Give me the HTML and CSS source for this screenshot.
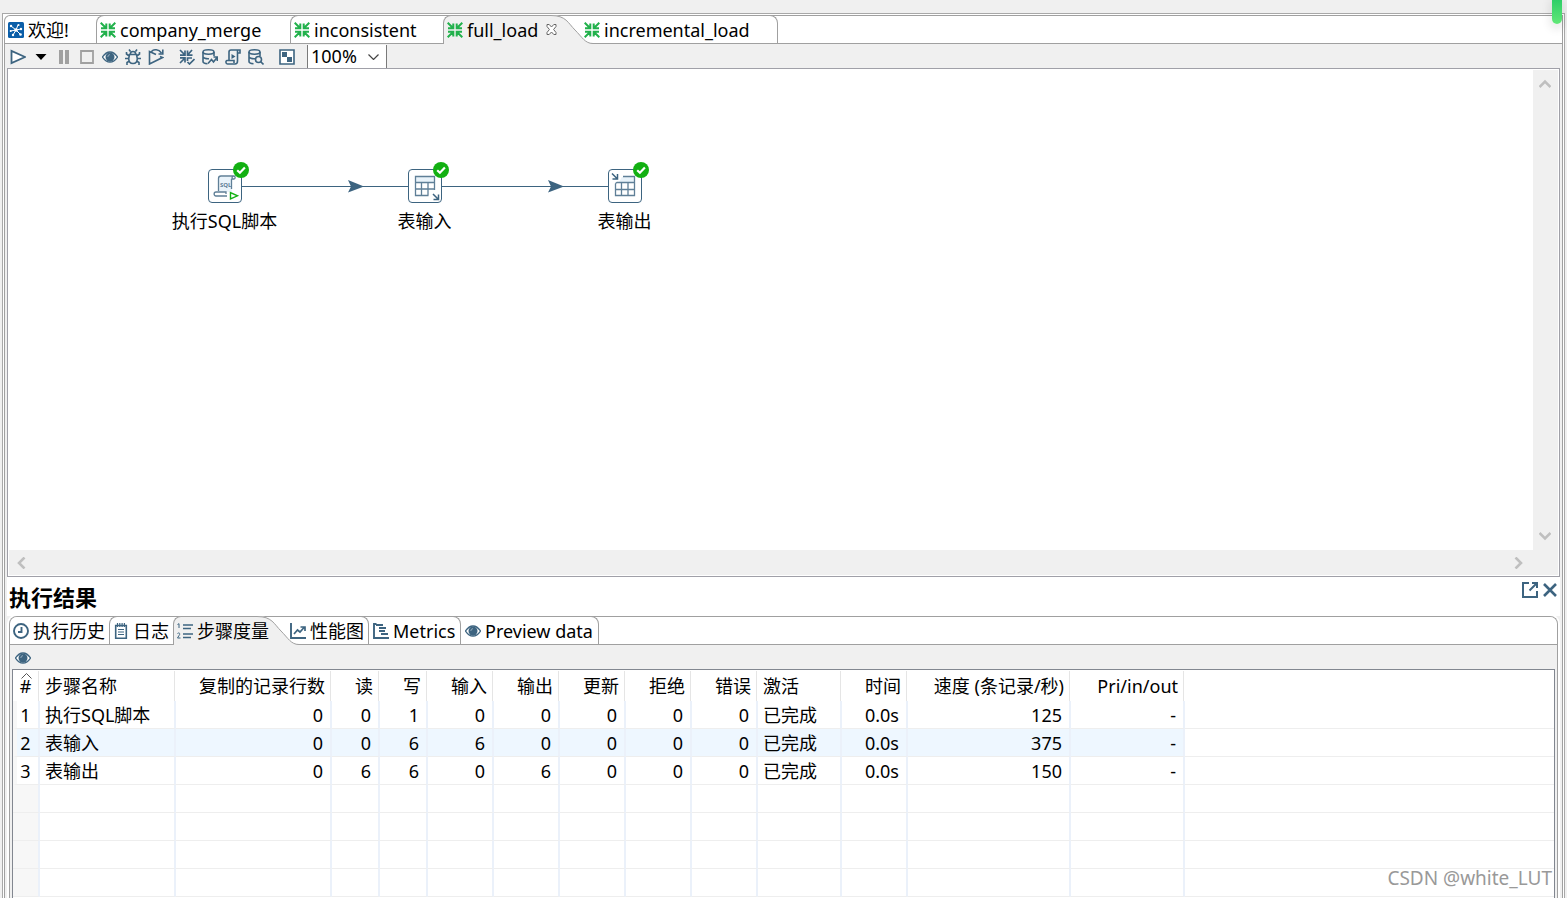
FILE: index.html
```html
<!DOCTYPE html>
<html lang="zh-CN">
<head>
<meta charset="utf-8">
<title>full_load</title>
<link rel="stylesheet" href="styles.css">
</head>
<body>
<svg class="defs" aria-hidden="true">
  <symbol id="trans" viewBox="0 0 16 16"><path d="M.7.7L6 6M6.300 1.500v4.800H1M15.300.7L10 6M9.700 1.500v4.800H15M.7 15.300L6 10M6.300 14.500V9.700H1M15.300 15.300L10 10M9.700 14.500V9.700H15" fill="none" stroke="#22b14c" stroke-width="2"/></symbol>
  <symbol id="eye" viewBox="0 0 16 16"><path d="M.5 8C3 4.200 5.500 3 8 3s5 1.200 7.500 5C13 11.800 10.500 13 8 13S3 11.800.5 8z" fill="#fff" stroke="#3d6480" stroke-width="1.300"/><circle cx="8" cy="8" r="4.500" fill="#3d6480"/><path d="M5.800 8A2.400 2.400 0 0 1 8 5.600" fill="none" stroke="#a9bdcb" stroke-width=".8"/></symbol>
  <symbol id="curve" viewBox="0 0 42 29"><path d="M0 0C15 0 17 8 24 15S34 28.500 42 28.500V29H0z" fill="#f0f0f0"/><path d="M0 .5C15 .5 17 8 24 15S34 28.500 42 28.500" fill="none" stroke="#a0a0a0"/></symbol>
  <symbol id="ok" viewBox="0 0 16 16"><circle cx="8" cy="8" r="8" fill="#12b012"/><path d="M4.200 8.200l2.700 2.600 5-5.200" fill="none" stroke="#fff" stroke-width="2.200"/></symbol>
  <symbol id="db" viewBox="0 0 16 16"><ellipse cx="6.500" cy="3" rx="5.500" ry="2.200"/><path d="M1 3v9.500c0 1.200 2 2 4.500 2.200M1 7.500c0 1.500 3 2.500 6 2.200M12 3v4"/></symbol>
</svg>

<main class="frame">
  <div class="workspace">
    <nav class="tabs" aria-label="编辑器">
      <button class="tab tab-welcome"><svg class="icon" viewBox="0 0 16 16"><rect width="16" height="16" rx="1.500" fill="#0b5ea8"/><path d="M8 8L3 4M8 8L2.500 9M8 8L5 13M8 8l4 4M8 8l5-1M8 8l2-5" stroke="#fff" stroke-width="1"/><g fill="#fff"><circle cx="8" cy="8" r="1.800"/><circle cx="3" cy="4" r="1.200"/><circle cx="2.700" cy="9" r="1"/><circle cx="5" cy="13" r="1.200"/><circle cx="12.500" cy="12.500" r="1.300"/><circle cx="13" cy="7" r="1.200"/><circle cx="10.500" cy="3" r="1.100"/></g></svg>欢迎!</button>
      <button class="tab tab-merge"><svg class="icon"><use href="#trans"/></svg>company_merge</button>
      <button class="tab tab-inconsistent"><svg class="icon"><use href="#trans"/></svg>inconsistent</button>
      <button class="tab active tab-full"><svg class="curve"><use href="#curve"/></svg><svg class="icon"><use href="#trans"/></svg><span>full_load</span><svg class="close" viewBox="0 0 11 11"><path d="M1 .5h2.200L5.500 3 7.800.5H10v2L7.600 5.500 10 8.500v2H7.800L5.500 8 3.200 10.500H1v-2l2.400-3L1 2.500z" fill="#fff" stroke="#666"/></svg></button>
      <button class="tab after tab-incremental"><svg class="icon"><use href="#trans"/></svg>incremental_load</button>
    </nav>

    <div class="toolbar">
      <button class="tool" aria-label="运行"><svg class="icon" viewBox="0 0 16 16"><path d="M1.500 2v12L15 8z" fill="#fff" stroke="#3d6480" stroke-width="1.800"/></svg></button>
      <button class="tool" aria-label="运行选项"><svg class="icon" viewBox="0 0 16 16"><path d="M2.500 5h11L8 11z"/></svg></button>
      <button class="tool" aria-label="暂停"><svg class="icon" viewBox="0 0 16 16"><path d="M3 1h4v14H3zM9 1h4v14H9z" fill="#a0a0a0"/></svg></button>
      <button class="tool" aria-label="停止"><svg class="icon" viewBox="0 0 16 16"><path d="M2 2h12v12H2z" fill="none" stroke="#a0a0a0" stroke-width="1.800"/></svg></button>
      <button class="tool" aria-label="预览"><svg class="icon"><use href="#eye"/></svg></button>
      <button class="tool" aria-label="调试"><svg class="icon" viewBox="0 0 16 16" fill="none" stroke="#3d6480" stroke-width="1.600"><path d="M4.500 5.500h7l.8 4c0 3-1.800 5-4.300 5s-4.300-2-4.300-5zM5.300 5.200C5.300 1.500 10.700 1.500 10.700 5.200M5.500 2.500L4 .5M10.500 2.500L12 .5M4.200 7L1.500 5V3M11.800 7l2.700-2V3M3.800 9.500H0M12.200 9.500H16M4.500 12L2 13.500V16M11.500 12l2.500 1.500V16"/></svg></button>
      <button class="tool" aria-label="重放"><svg class="icon" viewBox="0 0 16 16" fill="none" stroke="#3d6480" stroke-width="1.600"><path d="M8 5.500L1.500 2.500v12.500L14.500 8.500 12 7.500M3.500 2.500C6 0 10.500 0 13.500 4M14.800.5V5H10.500"/></svg></button>
      <span class="gap"></span>
      <button class="tool" aria-label="校验"><svg class="icon" viewBox="0 0 16 16" fill="none" stroke="#3d6480" stroke-width="1.700"><path d="M1 1l5 5M6 1.500v4.700H1M13 1L9 5.500M8.500 1.500v4.700h5M1 14l5-5M6 13.500V8.800H1M8.500 12V9H13M8.500 13l2 2 5-5"/></svg></button>
      <button class="tool" aria-label="影响分析"><svg class="icon" viewBox="0 0 16 16" fill="none" stroke="#3d6480" stroke-width="1.600"><use href="#db"/><path d="M6 14.500l3.500-4 2 2.500L15 8.500M11.500 8H15.300v4"/></svg></button>
      <button class="tool" aria-label="SQL"><svg class="icon" viewBox="0 0 16 16" fill="none" stroke="#3d6480" stroke-width="1.600"><path d="M4 11V3c0-1.500.7-2 2-2h9v3h-3M12.500 1.500V12c0 2-.8 3-2.500 3H2.500C.5 15 .5 11.500 2 11.500H9V14"/><path d="M6.500 5v5l4-2.500z" fill="#3d6480" stroke="none"/></svg></button>
      <button class="tool" aria-label="探索数据库"><svg class="icon" viewBox="0 0 16 16" fill="none" stroke="#3d6480" stroke-width="1.600"><use href="#db"/><circle cx="10.500" cy="10.500" r="3"/><path d="M12.700 12.700l2.800 2.800"/></svg></button>
      <span class="gap"></span>
      <button class="tool" aria-label="显示结果"><svg class="icon" viewBox="0 0 16 16"><path d="M1 1h14v14H1z" fill="#fff" stroke="#3d6480" stroke-width="1.600"/><path d="M3 3h5v5H3zM8 8h5v5H8z" fill="#3d6480"/></svg></button>
      <span class="gap"></span>
      <div class="zoom"><select aria-label="缩放"><option>100%</option></select><svg viewBox="0 0 11 6"><path d="M.5.5l5 5 5-5" fill="none" stroke="#444" stroke-width="1.200"/></svg></div>
    </div>

    <section class="canvas" aria-label="画布">
      <div class="graph">
        <svg class="hops" viewBox="0 0 700 200" aria-hidden="true"><path d="M234 117.500H401M434 117.500H601" stroke="#3d6480" stroke-width="1.200"/><path d="M340 111l16 6.500-16 6 3-6zM540 111l16 6.500-16 6 3-6z" fill="#3d6480"/></svg>
        <div class="node node-sql">
          <svg class="step" viewBox="0 0 34 34"><rect x=".5" y=".5" width="33" height="33" rx="3.500" fill="#fff" stroke="#3d6480"/><path d="M11 8h13v15H11z" fill="#e9f3fa"/><path d="M10.500 22V9.500c0-2 1-2.500 2.500-2.500h13c1.500 0 1.500 3 0 3h-2M24 10c0-2 .5-3 2-3M23.500 10v10M19 27H8c-2.500 0-2.500-4 0-4h10v2" fill="none" stroke="#5f7f97" stroke-width="1.300"/><text class="sql" x="12" y="18">SQL</text><path d="M22.500 23.500v6.500l7-3.200z" fill="#fff" stroke="#12b012" stroke-width="1.400"/></svg>
          <svg class="badge"><use href="#ok"/></svg>
          <span>执行SQL脚本</span>
        </div>
        <div class="node node-in">
          <svg class="step" viewBox="0 0 34 34"><rect x=".5" y=".5" width="33" height="33" rx="3.500" fill="#fff" stroke="#3d6480"/><path d="M8 8h18v5H8z" fill="#e9f3fa"/><path d="M26.500 21V7.500h-19v19H20.500M7.500 13.500h19M7.500 20H26.500M13.500 13.500v13M20 13.500v13" fill="none" stroke="#5f7f97" stroke-width="1.300"/><path d="M25 25l5 5M30.500 25.500v5h-5" fill="none" stroke="#3d6480" stroke-width="1.500"/></svg>
          <svg class="badge"><use href="#ok"/></svg>
          <span>表输入</span>
        </div>
        <div class="node node-out">
          <svg class="step" viewBox="0 0 34 34"><rect x=".5" y=".5" width="33" height="33" rx="3.500" fill="#fff" stroke="#3d6480"/><path d="M14 8h12v5H11z" fill="#e9f3fa"/><path d="M15 7.500h11.500v19h-19v-12M7.500 14.500L9 13.500h17.500M7.500 20.500h19M13.500 13.500v13M20 13.500v13" fill="none" stroke="#5f7f97" stroke-width="1.300"/><path d="M4 4.500l5 5M9.500 5v5h-5" fill="none" stroke="#3d6480" stroke-width="1.500"/></svg>
          <svg class="badge"><use href="#ok"/></svg>
          <span>表输出</span>
        </div>
      </div>
      <div class="vscroll"><button aria-label="向上"><svg viewBox="0 0 12 12"><path d="M.5 9L6 3.500 11.500 9"/></svg></button><button aria-label="向下"><svg viewBox="0 0 12 12"><path d="M.5 3L6 8.500 11.500 3"/></svg></button></div>
      <div class="hscroll"><button aria-label="向左"><svg viewBox="0 0 12 12"><path d="M8.500.5L3 6l5.500 5.500"/></svg></button><button aria-label="向右"><svg viewBox="0 0 12 12"><path d="M3.500.5L9 6l-5.500 5.500"/></svg></button></div>
    </section>
  </div>

  <section class="results">
    <header class="results-head">
      <h2>执行结果</h2>
      <div class="actions">
        <button aria-label="最大化"><svg class="icon" viewBox="0 0 16 16" fill="none" stroke="#3d6480" stroke-width="2"><path d="M7 1H1v14h14V9M10 1h5v5M15 1L7.500 8.500"/></svg></button>
        <button aria-label="关闭"><svg class="icon" viewBox="0 0 16 16"><path d="M2 2l12 12M14 2L2 14" stroke="#3d6480" stroke-width="2.600"/></svg></button>
      </div>
    </header>
    <div class="folder">
      <nav class="tabs" aria-label="结果">
        <button class="tab tab-history"><svg class="icon" viewBox="0 0 16 16" fill="none" stroke="#3d6480" stroke-width="1.900"><circle cx="8" cy="8" r="7"/><path d="M8.500 4v5H5"/></svg>执行历史</button>
        <button class="tab tab-log"><svg class="icon" viewBox="0 0 16 16" fill="none" stroke="#3d6480"><path d="M2.700 2.500h10.600v12.700H2.700z" stroke-width="1.600"/><path d="M4.500 0v4M6.800 0v4M9.100 0v4M11.400 0v4M5 6.500h6M5 9h6M5 11.500h6" stroke-width="1.200"/></svg>日志</button>
        <button class="tab active tab-metrics-step"><svg class="curve"><use href="#curve"/></svg><svg class="icon" viewBox="0 0 16 16" fill="none" stroke="#3d6480"><path d="M6 2h10M6 5.500h8M6 11h10M6 14.500h8" stroke-width="1.500"/><path d="M.5 1.500L2 .7V5M.5 10.500c2-1.500 3 .5 1.500 2L.5 15H3.500"/></svg><span>步骤度量</span></button>
        <button class="tab after tab-chart"><svg class="icon" viewBox="0 0 16 16" fill="none" stroke="#3d6480"><path d="M1 0v15h15" stroke-width="1.900"/><path d="M4 11l3.500-4 2.500 2 4.500-5M10.500 4H15v4" stroke-width="1.700"/></svg>性能图</button>
        <button class="tab after tab-metrics"><svg class="icon" viewBox="0 0 16 16" fill="none" stroke="#3d6480"><path d="M3.500 1H1v14h15" stroke-width="1.900"/><path d="M3 2h7M6 5h7M6 8h6M8 11h7" stroke-width="2"/></svg>Metrics</button>
        <button class="tab after tab-preview"><svg class="icon"><use href="#eye"/></svg>Preview data</button>
      </nav>
      <div class="toolbar"><button class="tool" aria-label="显示"><svg class="icon"><use href="#eye"/></svg></button></div>
      <div class="grid">
        <table>
          <colgroup><col class="c-id"><col class="c-name"><col class="c-copy"><col class="c-short"><col class="c-short"><col class="c-num"><col class="c-num"><col class="c-num"><col class="c-num"><col class="c-num"><col class="c-state"><col class="c-num"><col class="c-speed"><col class="c-pri"><col></colgroup>
          <thead><tr><th class="id"><svg class="sort" viewBox="0 0 11 6"><path d="M.5 5.500l5-5 5 5" fill="none" stroke="#555"/></svg>#</th><th class="left">步骤名称</th><th>复制的记录行数</th><th>读</th><th>写</th><th>输入</th><th>输出</th><th>更新</th><th>拒绝</th><th>错误</th><th class="left">激活</th><th>时间</th><th>速度 (条记录/秒)</th><th>Pri/in/out</th><th></th></tr></thead>
          <tbody>
            <tr><td class="id">1</td><td class="left">执行SQL脚本</td><td>0</td><td>0</td><td>1</td><td>0</td><td>0</td><td>0</td><td>0</td><td>0</td><td class="left">已完成</td><td>0.0s</td><td>125</td><td>-</td><td></td></tr>
            <tr class="alt"><td class="id">2</td><td class="left">表输入</td><td>0</td><td>0</td><td>6</td><td>6</td><td>0</td><td>0</td><td>0</td><td>0</td><td class="left">已完成</td><td>0.0s</td><td>375</td><td>-</td><td></td></tr>
            <tr><td class="id">3</td><td class="left">表输出</td><td>0</td><td>6</td><td>6</td><td>0</td><td>6</td><td>0</td><td>0</td><td>0</td><td class="left">已完成</td><td>0.0s</td><td>150</td><td>-</td><td></td></tr>
            <tr class="empty"><td></td><td></td><td></td><td></td><td></td><td></td><td></td><td></td><td></td><td></td><td></td><td></td><td></td><td></td><td></td></tr>
            <tr class="empty"><td></td><td></td><td></td><td></td><td></td><td></td><td></td><td></td><td></td><td></td><td></td><td></td><td></td><td></td><td></td></tr>
            <tr class="empty"><td></td><td></td><td></td><td></td><td></td><td></td><td></td><td></td><td></td><td></td><td></td><td></td><td></td><td></td><td></td></tr>
            <tr class="empty"><td></td><td></td><td></td><td></td><td></td><td></td><td></td><td></td><td></td><td></td><td></td><td></td><td></td><td></td><td></td></tr>
          </tbody>
        </table>
      </div>
    </div>
  </section>
</main>
<div class="float-pill"></div>
<div class="watermark">CSDN @white_LUT</div>
</body>
</html>
```
FILE: styles.css
```css
* { box-sizing: border-box; }

body {
  margin: 0;
  height: 100vh;
  overflow: hidden;
  display: flex;
  flex-direction: column;
  position: relative;
  background: #f0f0f0;
  color: #000;
  font: 18px/24px "Noto Sans", "Noto Sans CJK SC", sans-serif;
}

button {
  margin: 0;
  padding: 0;
  border: 0;
  background: none;
  color: inherit;
  font: inherit;
}

svg { display: block; flex: none; }
.defs { position: absolute; width: 0; height: 0; }
.icon { width: 16px; height: 16px; }

/* Outer double frame */
.frame {
  flex: 1;
  min-height: 0;
  display: flex;
  flex-direction: column;
  margin: 13px 2px 0;
  padding: 1px 1px 0;
  border: 1px solid #a8a8a8;
  border-bottom: 0;
  background: #fff;
}

.workspace {
  flex: 1;
  min-height: 0;
  display: flex;
  flex-direction: column;
  border: 1px solid #a0a0a0;
  border-bottom: 0;
  border-top-left-radius: 6px;
  background: #f0f0f0;
}

/* Tabs */
.tabs {
  display: flex;
  height: 28px;
  background: #fff;
  box-shadow: inset 0 -1px #a0a0a0;
  border-top-left-radius: 6px;
}

.tab {
  position: relative;
  display: flex;
  align-items: center;
  gap: 4px;
  margin-top: -1px;
  padding: 0 0 1px 3px;
  border: solid #a0a0a0;
  border-width: 1px 0 0 1px;
  border-top-left-radius: 8px;
  white-space: nowrap;
}

.tab:first-child { border-color: transparent; padding-left: 2px; }
.tab.after { border-width: 1px 1px 0 0; border-radius: 0 8px 0 0; }
.tab.active { z-index: 1; border-color: transparent; }
.tab.active > * { position: relative; }

.tab.active::before {
  content: "";
  position: absolute;
  inset: -1px 29px 0 -1px;
  border: solid #a0a0a0;
  border-width: 1px 0 0 1px;
  border-top-left-radius: 8px;
  background: #f0f0f0;
}

.tab.active > .curve {
  position: absolute;
  top: -1px;
  right: -12px;
  width: 42px;
  height: 29px;
}

.close { width: 11px; height: 11px; margin-left: 4px; }

.tab-welcome { width: 91px; }
.tab-merge { width: 194px; }
.tab-inconsistent { width: 153px; }
.tab-full { width: 138px; }
.tab-incremental { width: 197px; }

.tab-history { width: 99px; }
.tab-log { width: 64px; }
.tab-metrics-step { width: 114px; }
.tab-chart { width: 82px; }
.tab-metrics { width: 92px; }
.tab-preview { width: 138px; }
.tab-metrics, .tab-preview { padding-left: 4px; }

/* Toolbars */
.toolbar {
  display: flex;
  align-items: center;
  height: 24px;
  padding: 0 1px;
}

.tool {
  display: flex;
  align-items: center;
  justify-content: center;
  width: 23px;
  height: 24px;
  padding-top: 2px;
}

.gap { width: 8px; }
.gap:nth-last-child(2) { width: 9px; }

.zoom {
  position: relative;
  align-self: flex-end;
  width: 80px;
  height: 23px;
}

.zoom select {
  display: block;
  appearance: none;
  width: 100%;
  height: 100%;
  margin: 0;
  padding: 0 0 2px 3px;
  border: solid #7a7a7a;
  border-width: 0 1px;
  border-radius: 0;
  background: #fff;
  color: #000;
  font: inherit;
  line-height: 20px;
}

.zoom svg {
  position: absolute;
  top: 9px;
  right: 8px;
  width: 11px;
  height: 6px;
  pointer-events: none;
}

/* Canvas */
.canvas {
  flex: 1;
  min-height: 0;
  display: grid;
  grid-template: 1fr 25px / 1fr 25px;
  margin: 0 2px;
  padding: 1px;
  border: 1px solid #a0a0a8;
  background: #fff;
}

.graph { position: relative; overflow: hidden; margin: -1px 0 0 -1px; }

.hops {
  position: absolute;
  left: 0;
  top: 0;
  width: 700px;
  height: 200px;
}

.node {
  position: absolute;
  top: 100px;
  display: flex;
  flex-direction: column;
  align-items: center;
  gap: 6px;
  width: 120px;
}

.node-sql { left: 157px; }
.node-in { left: 357px; }
.node-out { left: 557px; }
.node span { padding-right: 1px; }
.step { width: 34px; height: 34px; }
.sql { font: bold 6px "Noto Sans", sans-serif; fill: #5f7f97; }

.badge {
  position: absolute;
  left: 68px;
  top: -7px;
  width: 16px;
  height: 16px;
}

.vscroll, .hscroll {
  display: flex;
  justify-content: space-between;
  background: #f0f0f0;
}

.vscroll { flex-direction: column; padding: 8px 6px; }
.hscroll { grid-column: 1 / 3; align-items: center; padding: 0 34px 0 7px; }

.vscroll svg, .hscroll svg {
  width: 12px;
  height: 12px;
  fill: none;
  stroke: #bfbfbf;
  stroke-width: 2.600;
}

/* Results */
.results {
  padding: 0 2px;
  border: solid #a0a0a0;
  border-width: 0 1px;
  background: #f0f0f0;
}

.results-head {
  display: flex;
  justify-content: space-between;
  height: 39px;
  padding: 5px 2px 0;
  background: #fff;
}

h2 { margin: 0; font-size: 22px; line-height: 30px; }
.actions { display: flex; gap: 4px; align-items: flex-start; }

.folder {
  padding: 0 2px;
  border: 1px solid #a0a0a0;
  border-bottom: 0;
  border-radius: 8px 8px 0 0;
  box-shadow: 0 0 0 2px #fff;
  margin: 0 2px;
}

.folder .tabs { margin: 0 -2px; border-radius: 7px 7px 0 0; }
.folder .toolbar { padding: 0; }
.folder .tool { width: 22px; }

.grid {
  padding-bottom: 1px;
  border: 1px solid #828790;
  border-bottom: 0;
  background: #fff;
}

table { width: 100%; border-collapse: separate; border-spacing: 0; table-layout: fixed; }
.c-id { width: 27px; }
.c-name { width: 136px; }
.c-copy { width: 156px; }
.c-short { width: 48px; }
.c-num { width: 66px; }
.c-state { width: 84px; }
.c-speed { width: 163px; }
.c-pri { width: 114px; }

th, td { text-align: right; white-space: nowrap; font-weight: 400; }
th { position: relative; height: 31px; padding: 0 7px 0 0; }

th:not(:last-child)::after {
  content: "";
  position: absolute;
  top: 1px;
  bottom: 0;
  right: 1px;
  width: 1px;
  background: #e5e5e5;
}

td {
  height: 28px;
  padding: 0 7px 0 0;
  border-right: 2px solid #ebf1fa;
  border-bottom: 1px solid #eee;
}

td:last-child { border-right: 0; }
.left { padding-left: 5px; text-align: left; }
th.id { padding: 0 2px 0 0; text-align: center; }
td.id { padding: 0 4px 0 0; text-align: center; border-left: 4px solid #f7f7f7; }
.alt td:not(:last-child) { background: #eef7ff; }
.empty td:first-child { background: #f7f7f7; }

.sort {
  position: absolute;
  top: 3px;
  left: 8px;
  width: 11px;
  height: 6px;
}

/* Overlays */
.float-pill {
  position: absolute;
  top: 0;
  right: 5px;
  width: 10px;
  height: 24px;
  border-radius: 0 0 5px 5px;
  background: linear-gradient(#2fce68, #62e878);
  box-shadow: 0 3px 8px 3px rgba(0, 0, 0, .08);
}

.watermark {
  position: absolute;
  right: 15px;
  bottom: 6px;
  color: #999;
  font-size: 19px;
  line-height: 28px;
  text-shadow: 1px 1px #fff;
}
```
